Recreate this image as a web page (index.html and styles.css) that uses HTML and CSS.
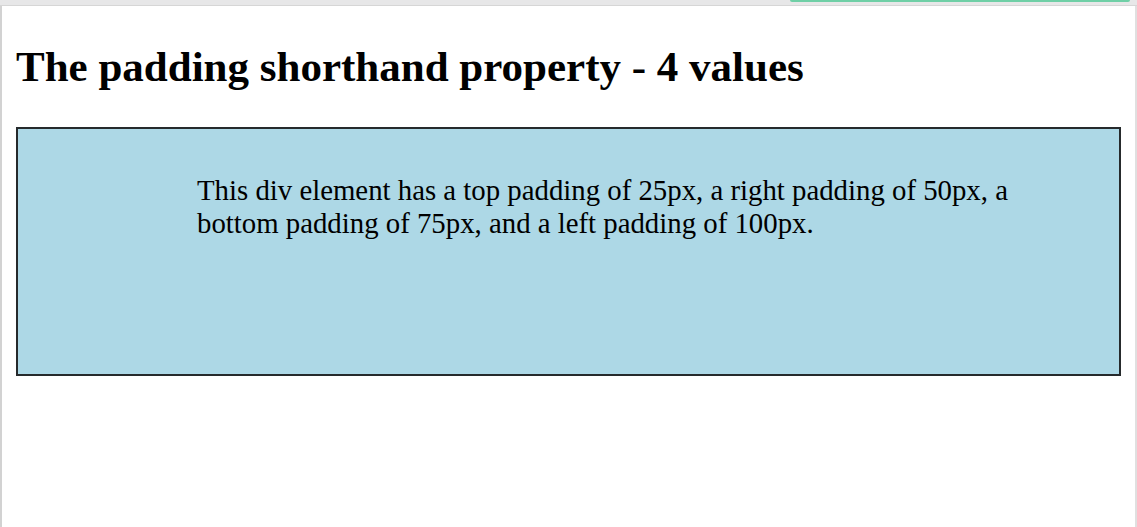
FILE: index.html
```html
<!DOCTYPE html>
<html>
<head>
<meta charset="utf-8">
<link rel="stylesheet" href="styles.css">
</head>
<body>
<div class="topbar"><div class="progress"></div></div>
<div class="frame">
  <h2 class="title">The padding shorthand property - 4 values</h2>
  <div class="box">This div element has a top padding of 25px, a right padding of 50px, a bottom padding of 75px, and a left padding of 100px.</div>
</div>
</body>
</html>
```
FILE: styles.css
```css
html, body {
  margin: 0;
  padding: 0;
  height: 100%;
  background: #ffffff;
}
body {
  display: flex;
  flex-direction: column;
  font-family: "Liberation Serif", "Times New Roman", serif;
  color: #000;
  overflow: hidden;
}
.topbar {
  height: 5px;
  background: #e7e7e8;
  border-bottom: 1px solid #d6d6d6;
  display: flex;
  justify-content: flex-end;
  flex-shrink: 0;
}
.progress {
  width: 340px;
  height: 2px;
  margin-right: 7px;
  background: #6fcfa6;
  border-radius: 0 0 2px 2px;
}
.frame {
  flex: 1;
  border-left: 2px solid #d2d2d2;
  border-right: 2px solid #e0e0e0;
  padding: 0 14px 14px;
}
.title {
  font-size: 43px;
  font-weight: bold;
  margin: 36px 0;
}
.box {
  background: #add8e6;
  border: 2px solid #262a2c;
  padding: 45px 90px 134px 179px;
  font-size: 28.8px;
}
```
